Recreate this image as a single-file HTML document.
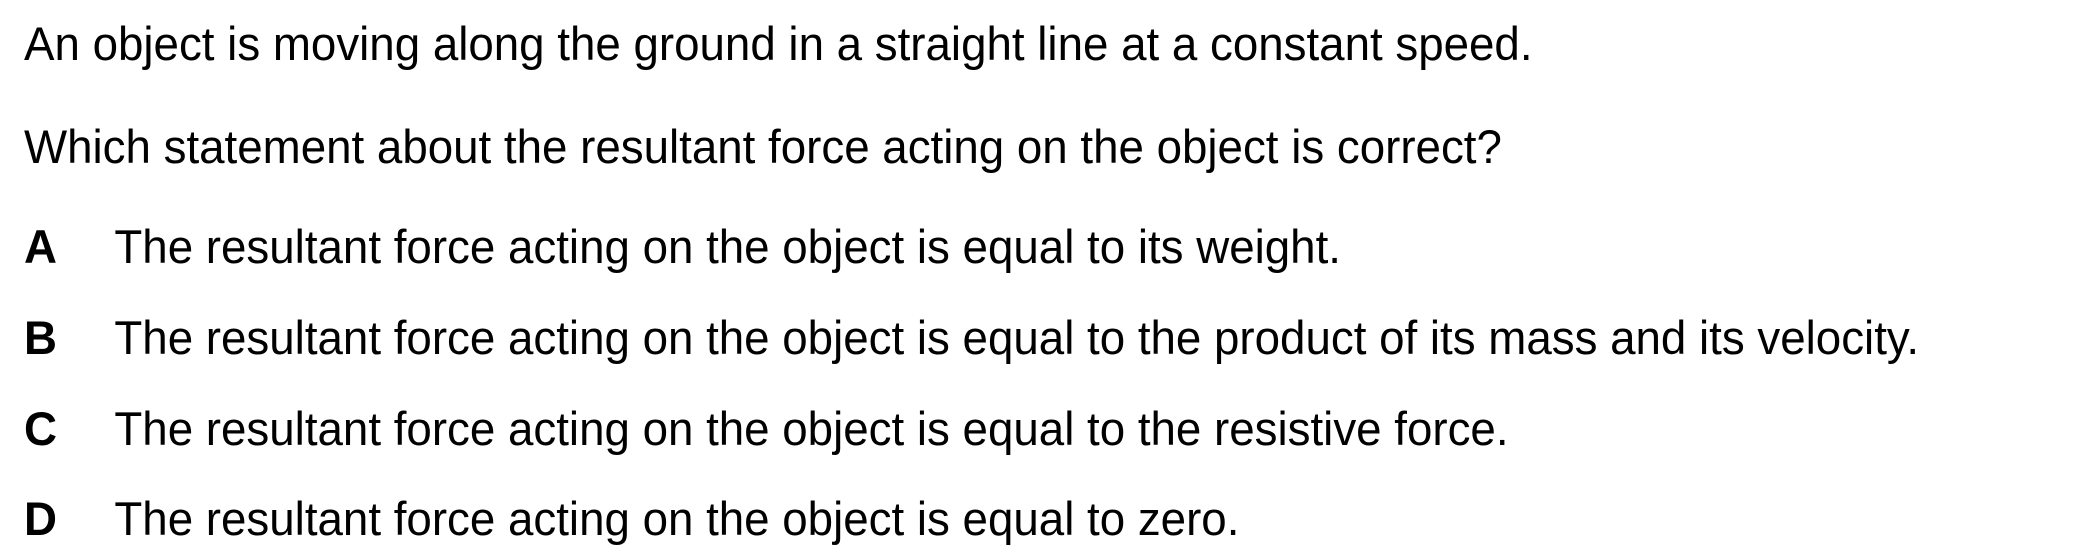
<!DOCTYPE html>
<html><head><meta charset="utf-8"><style>
html,body{margin:0;padding:0;background:#fff;}
body{width:2100px;height:560px;position:relative;overflow:hidden;font-family:"Liberation Sans",Arial,sans-serif;font-size:47px;color:#000;}
.l{position:absolute;left:24px;white-space:nowrap;line-height:1;transform-origin:0 0;transform:scaleX(0.972);}
.k{font-weight:bold;display:inline-block;width:93px;}
</style></head><body>
<div class="l" style="top:20px">An object is moving along the ground in a straight line at a constant speed.</div>
<div class="l" style="top:123px">Which statement about the resultant force acting on the object is correct?</div>
<div class="l" style="top:223px"><span class="k">A</span>The resultant force acting on the object is equal to its weight.</div>
<div class="l" style="top:314px"><span class="k">B</span>The resultant force acting on the object is equal to the product of its mass and its velocity.</div>
<div class="l" style="top:405px"><span class="k">C</span>The resultant force acting on the object is equal to the resistive force.</div>
<div class="l" style="top:495px"><span class="k">D</span>The resultant force acting on the object is equal to zero.</div>
</body></html>
